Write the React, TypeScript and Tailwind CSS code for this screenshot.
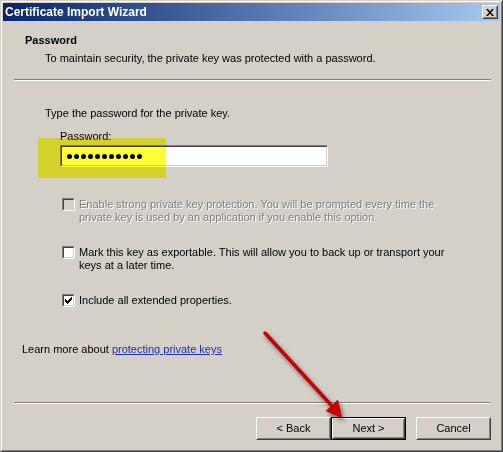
import React from "react";

const font = { fontFamily: '"Liberation Sans", Arial, sans-serif' };

const CHECK = [
  "......x",
  ".....xx",
  "x...xxx",
  "xx.xxx.",
  "xxxxx..",
  ".xxx...",
  "..x....",
];

function Checkbox({ checked, disabled }: { checked?: boolean; disabled?: boolean }) {
  return (
    <div className="w-[13px] h-[13px] shrink-0 border border-t-[#808080] border-l-[#808080] border-b-white border-r-white flex">
      <div
        className={
          "flex-1 border border-t-[#404040] border-l-[#404040] border-b-[#d4d0c8] border-r-[#d4d0c8] flex items-center justify-center " +
          (disabled ? "bg-[#d4d0c8]" : "bg-white")
        }
      >
        {checked && (
          <svg width="7" height="7" viewBox="0 0 7 7" shapeRendering="crispEdges">
            {CHECK.flatMap((row, y) =>
              row.split("").map((c, x) =>
                c === "x" ? <rect key={`${x}-${y}`} x={x} y={y} width="1" height="1" fill="#000" /> : null
              )
            )}
          </svg>
        )}
      </div>
    </div>
  );
}

function Button({ label, isDefault }: { label: string; isDefault?: boolean }) {
  return (
    <div className={"w-[75px] h-[23px] " + (isDefault ? "border border-black" : "")}>
      <div className="h-full border border-t-white border-l-white border-b-[#404040] border-r-[#404040] flex">
        <div className="flex-1 border border-t-[#d4d0c8] border-l-[#d4d0c8] border-b-[#808080] border-r-[#808080] flex items-center justify-center text-[11px] text-black">
          {label}
        </div>
      </div>
    </div>
  );
}

export default function App() {
  return (
    <div className="relative w-[503px] h-[452px] bg-[#d4d0c8]" style={font}>
      <div className="w-full h-full border border-t-[#d4d0c8] border-l-[#d4d0c8] border-b-[#404040] border-r-[#404040] flex">
        <div className="flex-1 border border-t-white border-l-white border-b-[#808080] border-r-[#808080] p-px flex flex-col">
          {/* Title bar */}
          <div className="h-[18px] shrink-0 bg-gradient-to-r from-[#0a246a] to-[#a6caf0] flex items-center pl-[2px] pr-[2px]">
            <div className="flex-1 text-white font-bold text-[12px] leading-[18px] whitespace-nowrap">
              Certificate Import Wizard
            </div>
            <div className="w-[16px] h-[14px] border border-t-white border-l-white border-b-[#404040] border-r-[#404040] flex">
              <div className="flex-1 bg-[#d4d0c8] border border-t-[#d4d0c8] border-l-[#d4d0c8] border-b-[#808080] border-r-[#808080] flex items-center justify-center">
                <svg width="8" height="7" viewBox="0 0 8 7">
                  <path d="M0 0 L2 0 L4 2.5 L6 0 L8 0 L5 3.5 L8 7 L6 7 L4 4.5 L2 7 L0 7 L3 3.5 Z" fill="#000" />
                </svg>
              </div>
            </div>
          </div>

          {/* Header */}
          <div className="shrink-0 pt-[13px] text-[11px] leading-[13px] text-black">
            <div className="pl-[22px] font-bold">Password</div>
            <div className="pl-[42px] mt-[5px]">To maintain security, the private key was protected with a password.</div>
          </div>
          <div className="shrink-0 mt-[14px] ml-[11px] mr-[9px] h-[2px] border-t border-t-[#808080] border-b border-b-white" />

          {/* Content */}
          <div className="flex-1 flex flex-col text-[11px] leading-[13px] text-black">
            <div className="pl-[42px] mt-[26px]">Type the password for the private key.</div>
            <div className="pl-[57px] mt-[10px]">Password:</div>
            <div className="relative ml-[57px] mt-[2px] w-[268px] h-[22px] border border-t-[#808080] border-l-[#808080] border-b-white border-r-white flex">
              <div className="flex-1 bg-white border border-t-[#404040] border-l-[#404040] border-b-[#d4d0c8] border-r-[#d4d0c8] flex items-center pl-[5px] gap-[2px]">
                {Array.from({ length: 11 }).map((_, i) => (
                  <div key={i} className="w-[5px] h-[5px] rounded-full bg-black" />
                ))}
              </div>
              <div className="absolute left-[-23px] top-[-8px] w-[128px] h-[40px] bg-[rgba(255,255,0,0.78)] mix-blend-multiply pointer-events-none" />
            </div>

            <div className="flex pl-[59px] mt-[31px] gap-[4px]">
              <Checkbox disabled />
              <div className="text-[#808080] [text-shadow:1px_1px_0_#fff]">
                Enable strong private key protection. You will be prompted every time the
                <br />
                private key is used by an application if you enable this option.
              </div>
            </div>
            <div className="flex pl-[59px] mt-[22px] gap-[4px]">
              <Checkbox />
              <div>
                Mark this key as exportable. This will allow you to back up or transport your
                <br />
                keys at a later time.
              </div>
            </div>
            <div className="flex pl-[59px] mt-[22px] gap-[4px]">
              <Checkbox checked />
              <div>Include all extended properties.</div>
            </div>

            <div className="pl-[19px] mt-[36px]">
              Learn more about{" "}
              <span className="text-[#1c2fb0] underline">protecting private keys</span>
            </div>
          </div>

          {/* Footer */}
          <div className="shrink-0 ml-[11px] mr-[9px] h-[2px] border-t border-t-[#808080] border-b border-b-white" />
          <div className="shrink-0 h-[45px] flex items-start pt-[13px] pr-[9px] justify-end">
            <Button label="< Back" />
            <Button label="Next >" isDefault />
            <div className="w-[10px]" />
            <Button label="Cancel" />
          </div>
        </div>
      </div>

      {/* Red arrow annotation */}
      <svg
        className="absolute left-0 top-0 pointer-events-none drop-shadow-[2px_3px_2px_rgba(0,0,0,0.5)]"
        width="503"
        height="452"
        viewBox="0 0 503 452"
      >
        <line x1="265" y1="333" x2="332" y2="406" stroke="#c80000" strokeWidth="3.5" strokeLinecap="round" />
        <polygon points="342,418 325.5,411 338,399.5" fill="#c80000" />
      </svg>
    </div>
  );
}
